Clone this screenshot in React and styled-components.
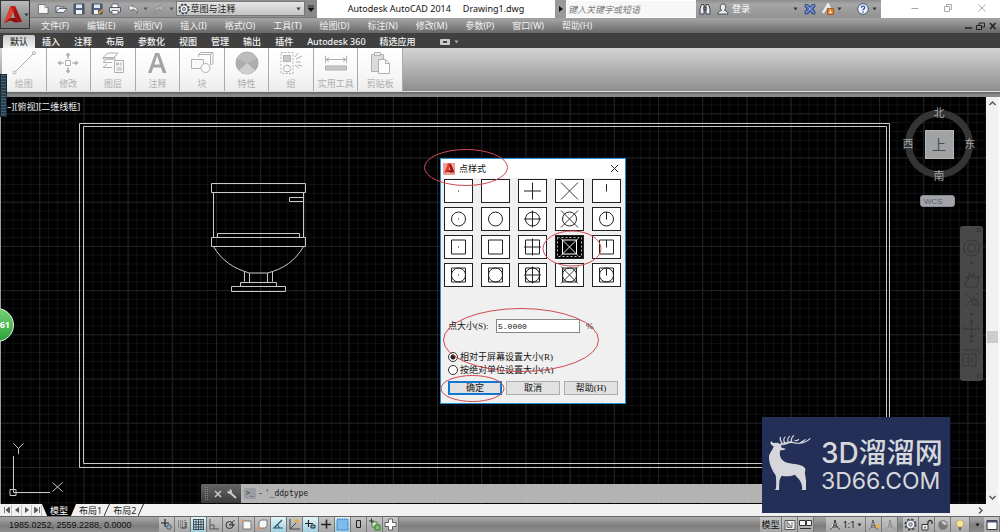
import React, { useState } from 'react';
import styled, { createGlobalStyle } from 'styled-components';

const GlobalStyle = createGlobalStyle`
  * {
    box-sizing: border-box;
  }
  body {
    margin: 0;
    background: #000;
    font-family: "Noto Sans", "Noto Sans CJK SC", sans-serif;
    font-size: 9px;
    line-height: 12px;
  }
  button, input, select {
    font: inherit;
    color: inherit;
    margin: 0;
    padding: 0;
    border: none;
    background: none;
  }
  svg {
    display: block;
    flex: none;
  }
`;

/* ---------- icons ---------- */

const Svg = ({ w = 12, h = 12, children, ...rest }) => (
  <svg width={w} height={h} viewBox={`0 0 ${w} ${h}`} fill="none" aria-hidden="true" {...rest}>
    {children}
  </svg>
);

const Caret = ({ color = '#333' }) => (
  <Svg w={5} h={4}><path d="M0.5 0.5h4L2.5 3.5z" fill={color} /></Svg>
);

const AcadLogo = ({ size = 20 }) => (
  <svg width={size} height={size} viewBox="0 0 20 20" aria-hidden="true">
    <path d="M7.5 1h4.5l7 16-6-2.2-3-8-2.5 6L1 18z" fill="#c4201a" />
    <path d="M7.5 1L1 18l6.500-5L10 6.800z" fill="#e0402b" />
    <path d="M1 18l6.500-5h5.500v1.800L19 17l-7 .6-4.500-2z" fill="#8d0f0f" />
    <path d="M12 1l7 16-6-2.200-2-6z" fill="#a01313" />
  </svg>
);

const quickIcons = {
  新建: <><path d="M1.500 1.500h6.500l3 3v6h-9.500z" fill="#f6f6f6" stroke="#3c4858" strokeWidth=".6" /><path d="M8 1.500v3h3" stroke="#667" strokeWidth=".7" /></>,
  打开: <><path d="M1 9.500V3h3l1 1h4v2" fill="#e7ebef" stroke="#3c4858" strokeWidth=".8" /><path d="M1 9.500L4 5.500h8L8.500 9.500z" fill="#f4f6f8" stroke="#3c4858" strokeWidth=".8" /></>,
  保存: <><path d="M1 1h10v10H1z" fill="#53627c" stroke="#323c50" strokeWidth=".8" /><path d="M3 1.500h6v3.500H3z" fill="#dfe5ec" /><path d="M3 7h6v4H3z" fill="#f2f2f2" /></>,
  另存为: <><path d="M1 1h10v10H1z" fill="#53627c" stroke="#323c50" strokeWidth=".8" /><path d="M3 1.500h6v3.500H3z" fill="#dfe5ec" /><path d="M3 7h4v4H3z" fill="#f2f2f2" /><path d="M7 10l4-4 1 1-4 4.500z" fill="#eba63a" stroke="#8a5a1c" strokeWidth=".4" /></>,
  打印: <><path d="M3 1h6v4H3z" fill="#fff" stroke="#445" strokeWidth=".7" /><path d="M0.500 4.500h11v4.500h-11z" fill="#e2e4e8" stroke="#39424f" strokeWidth=".8" /><path d="M3 7.500h6v3.500H3z" fill="#fff" stroke="#445" strokeWidth=".7" /></>,
  放弃: <path d="M5 1.500L1 5l4 3.300V6.300c3 0 4.500 1 5 4 1.200-4.500-1-6.700-5-6.700z" fill="#e9edf2" stroke="#4a5360" strokeWidth=".6" />,
  重做: <path d="M7 1.500L11 5 7 8.300V6.300c-3 0-4.500 1-5 4-1.200-4.500 1-6.700 5-6.700z" fill="#b4b4b4" stroke="#7d7d7d" strokeWidth=".6" />,
};

const Gear = ({ size = 12 }) => (
  <svg width={size} height={size} viewBox="0 0 12 12" fill="none" aria-hidden="true">
    <circle cx="6" cy="6" r="4.800" stroke="#39424f" strokeWidth="1.600" strokeDasharray="2.100 1.670" />
    <circle cx="6" cy="6" r="4" fill="#f3f5f7" stroke="#39424f" strokeWidth=".7" />
    <circle cx="6" cy="6" r="1.600" fill="#ccc" stroke="#39424f" strokeWidth=".7" />
  </svg>
);

const ribbonPanels = [
  ['绘图', <><path d="M3.500 20.500L21 3" /><circle cx="2.500" cy="21.500" r="1.500" /><circle cx="22" cy="2" r="1.500" /></>],
  ['修改', <><path d="M9.500 9.500h5v5h-5z" /><path d="M12 7.500V4M12 16.500V20M7.500 12H4M16.500 12H20" strokeWidth="1.600" /><path d="M9.500 4.500L12 1.500l2.500 3zM9.500 19.500L12 22.500l2.500-3zM4.500 9.500L1.500 12l3 2.500zM19.500 9.500l3 2.500-3 2.500z" fill="#a9a9a9" stroke="none" /></>],
  ['图层', <><path d="M2 6.500L7 2h10l-4 4.500zM2 11.500L6 8h9M2 11.500h9M2 16.500L6 13M2 16.500h9" /><path d="M2 6.500V8h10l3-3.500" /><path d="M13.500 9.500h9v12h-9z" fill="#fafafa" /><path d="M15.500 12h2v2h-2zM19 12h2M19 14h2M15.500 17h5.500M15.500 19h5.500" /></>],
  ['注释', <path d="M3 22L10.200 2h4L21.500 22h-3.800l-1.800-5.500H8.300L6.500 22zM9.300 13.500h5.700L12.200 5z" fill="#a3a3a3" stroke="none" fillRule="evenodd" />],
  ['块', <><path d="M8.500 6V3.500h12v10" /><path d="M8.500 3.500L11 1.500h12v11l-2.500 1.500M20.500 3.500L23 1.500" /><path d="M1.500 8.500h12v9h-12z" fill="#fafafa" /><circle cx="15.500" cy="17" r="4.500" fill="#fafafa" /></>],
  ['特性', <><circle cx="12" cy="12" r="11" fill="#b9b9b9" stroke="#aaa" /><path d="M12 12L2 8A11 11 0 0 1 22 8z" fill="#bcbcbc" stroke="none" /><path d="M12 12L2 8a11 11 0 0 0 2 11.500z" fill="#adadad" stroke="none" /><path d="M12 12l10-4a11 11 0 0 1-2 11.500z" fill="#adadad" stroke="none" /><path d="M12 12L4 19.500a11 11 0 0 0 16 0z" fill="#cfcfcf" stroke="none" /></>],
  ['组', <><path d="M2 1.500h12v21H2z" strokeDasharray="2 1.500" /><path d="M4.500 4.500h7v6h-7z" fill="#c9c9c9" /><circle cx="8" cy="17.500" r="3.500" /><path d="M16 6l3-4M17 8l6-3M17 11h5M16 14l4 3M19 14l4 1" /></>],
  ['实用工具', <><path d="M1.500 5v7M22.500 5v7M3 8.500h18M5 6.500l-3 2 3 2M19 6.500l3 2-3 2" /><path d="M1.500 15h21v4h-21z" fill="#c8c8c8" /></>],
  ['剪贴板', <><path d="M3.500 3.500h12v17h-12z" fill="#dcdcdc" /><path d="M6.500 4.500v-3h6v3z" fill="#eee" /><path d="M10.500 8.500h7l4 4v10h-11z" fill="#fcfcfc" /><path d="M17.500 8.500v4h4" /></>],
];

const statusTools = [
  ['推断约束', false, <><path d="M1 5h8M5 1v8" stroke="#222" strokeWidth="1.200" /><circle cx="9" cy="9" r="2.300" stroke="#456" fill="#9ab" /></>],
  ['捕捉', false, <><path d="M2 3h5M2 5h5M2 7h5M2 9h6M9 2v8" stroke="#555" strokeDasharray="1 1" /><path d="M5 10h5V4" stroke="#333" /></>],
  ['栅格', true, <path d="M1 1.500h11M1 4h11M1 6.500h11M1 9h11M1 11.500h11M1.500 1v11M4 1v11M6.500 1v11M9 1v11M11.500 1v11" stroke="#29323d" strokeWidth=".8" />],
  ['正交', false, <path d="M2 1v10h9M2 7h4v4" stroke="#555" />],
  ['极轴', false, <><circle cx="5.500" cy="7" r="3.500" stroke="#333" /><path d="M5.500 7l5-5M5 7h6" stroke="#333" /></>],
  ['对象捕捉', false, <><path d="M3 3h8v8H3z" fill="#fbfbfb" stroke="#777" /><circle cx="2.500" cy="2.500" r="1.500" fill="#e9965d" /></>],
  ['三维捕捉', false, <><path d="M3 4l2-2h6v6l-2 2H3z" fill="#f8f8f8" stroke="#777" /><circle cx="2.500" cy="10" r="1.500" fill="#e9965d" /></>],
  ['对象追踪', true, <path d="M10 2L2 10h9M5 7c1.500.500 2 1.500 2 3" stroke="#245560" strokeWidth="1.200" />],
  ['动态 UCS', false, <><path d="M2 1v10h10M2 11l7-7" stroke="#444" /><circle cx="9" cy="3" r="2" fill="#efa93b" /></>],
  ['动态输入', true, <><path d="M1 5.500h8M4.500 2v7" stroke="#222" strokeWidth="1.200" /><path d="M7 7h4v3H7z" fill="#8aa" stroke="#234" /></>],
  ['线宽', false, <path d="M1 6.500h10M6.500 1.500v9" stroke="#222" strokeWidth="1.600" />],
  ['透明度', true, <path d="M1 1h11v11H1z" fill="#7cbcf0" stroke="#2c6fae" strokeDasharray="1.500 .7" />],
  ['快捷特性', false, <path d="M4.500 2.500h4v7h-4z" stroke="#222" />],
  ['选择循环', false, <><path d="M1 3h5M3.500.500v5" stroke="#333" /><path d="M4 4h5v5H4z" fill="#d9e6d4" stroke="#3a7c33" /><path d="M7 7h5v5H7z" fill="#7ec36c" stroke="#3a7c33" /></>],
  ['注释监视器', false, <path d="M4.500 1h4v3.500H12v4H8.500V12h-4V8.500H1v-4h3.500z" fill="#fff" stroke="#444" strokeWidth=".8" />],
];

/* ---------- header ---------- */

const Page = styled.div`
  min-height: 100vh;
  display: flex;
  flex-direction: column;
  overflow: hidden;
`;

const Header = styled.header`
  display: grid;
  grid-template-columns: 30px 1fr;
  height: 33px;
  background: linear-gradient(#9c9c9c 18px, #a2a2a2 19px, #696969);
`;

const AppButton = styled.button`
  height: 29px;
  display: flex;
  align-items: center;
  gap: 1px;
  padding-left: 2px;
  border: 1px solid #333;
  background: linear-gradient(#b9b9b9, #777);
`;

const TitleBar = styled.div`
  display: flex;
  height: 18px;
  background: #fff;
`;

const QuickTools = styled.div`
  display: flex;
  align-items: center;
  width: 287px;
  padding-left: 4px;
  background: linear-gradient(#8d8d8d, #a6a6a6 4px, #929292);
  border-bottom: 1px solid #777;
`;

const QuickButton = styled.button`
  width: ${(p) => (p.$narrow ? 8 : 18)}px;
  height: 16px;
  display: flex;
  align-items: center;
  justify-content: center;
`;

const Workspace = styled.label`
  display: flex;
  align-items: center;
  width: 130px;
  height: 15px;
  gap: 1px;
  margin-left: auto;
  padding: 0 3px 0 1px;
  border: 1px solid #777;
  background: linear-gradient(#e6e6e6, #c4c4c4);
  color: #222;
  select {
    flex: 1;
    height: 13px;
    appearance: none;
    outline: none;
  }
`;

const MoreButton = styled.button`
  width: 12px;
  height: 17px;
  display: flex;
  align-items: center;
  justify-content: center;
  background: #8a8a8a;
`;

const WindowTitle = styled.h1`
  flex: 1;
  display: flex;
  justify-content: center;
  align-items: center;
  gap: 12px;
  margin: 0;
  font-size: 9px;
  font-weight: 400;
  color: #111;
  white-space: nowrap;
`;

const SearchArrow = styled.button`
  width: 11px;
  display: flex;
  align-items: center;
  justify-content: center;
  background: #999;
`;

const SearchInput = styled.input`
  width: 130px;
  height: 16px;
  margin-top: 1px;
  padding-left: 2px;
  background: #f7f7f7;
  font-style: italic;
  outline: none;
  &::placeholder {
    color: #777;
  }
`;

const InfoTools = styled.div`
  display: flex;
  align-items: center;
  gap: 6px;
  width: 185px;
  padding: 0 4px 0 3px;
  background: linear-gradient(#8d8d8d, #a6a6a6 4px, #929292);
  color: #fff;
`;

const IconButton = styled.button`
  display: flex;
  align-items: center;
  gap: 3px;
`;

const SignIn = styled(IconButton)`
  flex: 1;
  > svg:last-child {
    margin-left: auto;
  }
`;

const WindowButtons = styled.div`
  display: flex;
  align-items: center;
  justify-content: space-around;
  width: 119px;
  padding: 0 2px 2px 18px;
`;

const MenuBar = styled.nav`
  display: flex;
  align-items: center;
  height: 15px;
  padding-left: 11px;
  gap: 18px;
  color: #f2f2f2;
  white-space: nowrap;
  a {
    color: inherit;
    text-decoration: none;
  }
`;

const DocButtons = styled.div`
  margin-left: auto;
  display: flex;
  gap: 3px;
  padding-right: 3px;
`;

/* ---------- ribbon ---------- */

const RibbonTabs = styled.div`
  display: flex;
  height: 15px;
  padding-left: 3px;
  background: #404040;
  align-items: flex-end;
`;

const RibbonTab = styled.button`
  height: 13px;
  padding: 0 7px;
  color: ${(p) => (p.$active ? '#333' : '#f4f4f4')};
  background: ${(p) => (p.$active ? 'linear-gradient(#c9c9c9, #f4f4f4)' : 'none')};
  border-radius: 2px 2px 0 0;
  font-weight: 500;
  white-space: nowrap;
`;

const TabExtra = styled.button`
  display: flex;
  align-items: center;
  gap: 4px;
  height: 13px;
  margin-left: 17px;
`;

const Ribbon = styled.div`
  height: 49px;
  padding-left: 2px;
  background: linear-gradient(#d4d4d4, #8e8e8e 43px, #dedede 43px, #dedede 44px, #6e6e6e 44px, #6e6e6e 46px, #888 46px, #888);
`;

const Panels = styled.div`
  display: grid;
  grid-template-columns: repeat(9, 1fr);
  width: 401px;
  height: 43px;
`;

const Panel = styled.button`
  display: flex;
  flex-direction: column;
  align-items: center;
  justify-content: space-between;
  padding: 3px 0 1px;
  border-right: 1px solid #aaa;
  background: linear-gradient(#fff, #f7f7f7 60%, #ececec);
  color: #aeaeae;
  white-space: nowrap;
`;

/* ---------- drawing area ---------- */

const Workarea = styled.main`
  flex: 1;
  display: flex;
  min-height: 407px;
`;

const Stage = styled.div`
  position: relative;
  flex: 1;
  overflow: hidden;
  background: #000;
  border-left: 1px solid #999;
`;

const Drawing = styled.svg`
  position: absolute;
  top: 0;
  left: 0;
  width: 100%;
  height: 100%;
  pointer-events: none;
`;

const ViewLabel = styled.div`
  position: absolute;
  top: 4px;
  left: 6px;
  color: #eee;
`;

const Grip = styled.div`
  position: absolute;
  top: 74px;
  left: 0;
  width: 7px;
  height: 43px;
  border: 1px solid #1d2730;
  background: repeating-linear-gradient(#3d6480 0 1px, #2b3d49 1px 3px);
`;

const Badge = styled.div`
  position: absolute;
  top: 308px;
  left: -20px;
  width: 34px;
  height: 34px;
  padding: 9px 3px 0 0;
  border: 1px solid #e4efe4;
  border-radius: 50%;
  background: linear-gradient(#74d277, #2ea23c);
  color: #fff;
  font-weight: 700;
  line-height: 14px;
  text-align: right;
`;

const ViewCube = styled.div`
  position: absolute;
  top: 9px;
  right: 13px;
  width: 68px;
  height: 76px;
  display: grid;
  grid-template: 13px 1fr 13px / 10px 1fr 10px;
  place-items: center;
  color: #a5a5a5;
  font-size: 11px;
  &::before {
    content: "";
    position: absolute;
    inset: 4px 0;
    border: 7px solid #343434;
    border-radius: 50%;
  }
  span {
    position: relative;
    grid-column: 2;
  }
  span:nth-of-type(2) {
    grid-column: 1;
    margin-left: -4px;
  }
  span:nth-of-type(3) {
    grid-column: 3;
    margin-right: -4px;
  }
`;

const CubeFace = styled.button`
  position: relative;
  grid-column: 2;
  grid-row: 2;
  width: 29px;
  height: 29px;
  border: 1px solid #b4b6b8;
  background: #a0a2a4;
  color: #484b50;
  font-size: 14px;
  line-height: 27px;
`;

const Wcs = styled.button`
  position: absolute;
  top: 98px;
  right: 31px;
  width: 35px;
  height: 12px;
  padding-left: 3px;
  border: 1px solid #8b8c93;
  border-radius: 3px;
  background: #a2a3ab;
  color: #5a5c64;
  font-family: "Liberation Sans", sans-serif;
  font-size: 8px;
  line-height: 9px;
  text-align: left;
`;

const NavBar = styled.div`
  position: absolute;
  top: 129px;
  right: 3px;
  width: 23px;
  height: 155px;
  border-radius: 3px;
  background: rgba(78, 78, 78, 0.92);
`;

const CommandLine = styled.div`
  position: absolute;
  left: 200px;
  right: 60px;
  bottom: 1px;
  height: 19px;
  display: flex;
  border-radius: 3px;
  overflow: hidden;
  background: rgba(190, 190, 190, 0.94);
  color: #222;
  font-family: "DejaVu Sans Mono", monospace;
  font-size: 8px;
`;

const CommandGrip = styled.div`
  width: 40px;
  display: flex;
  align-items: center;
  justify-content: space-between;
  padding: 0 4px;
  background: linear-gradient(#666, #3c3c3c);
`;

const CommandField = styled.label`
  flex: 1;
  display: flex;
  align-items: center;
  gap: 2px;
  padding-left: 3px;
  input {
    flex: 1;
    outline: none;
  }
`;

const PromptIcon = styled.span`
  width: 12px;
  height: 11px;
  border-radius: 2px;
  background: #999da3;
  color: #333;
  font-size: 7px;
  line-height: 10px;
  text-align: center;
`;

const ScrollBar = styled.div`
  width: 14px;
  display: flex;
  flex-direction: column;
  align-items: center;
  justify-content: space-between;
  padding: 4px 0;
  background: #f1f1f1;
  border-right: 2px solid #fafafa;
`;

const Thumb = styled.div`
  width: 11px;
  height: 12px;
  margin-top: 72px;
  background: #cdcdcd;
`;

/* ---------- point style dialog ---------- */

const Dialog = styled.section`
  position: absolute;
  top: 61px;
  left: 439px;
  width: 186px;
  border: 1px solid #2a8fce;
  background: #f0f0f0;
  color: #111;
  font-family: "Liberation Serif", "Noto Sans CJK SC", serif;
`;

const DialogTitle = styled.div`
  display: flex;
  align-items: center;
  gap: 4px;
  height: 19px;
  padding: 0 6px 0 2px;
  background: #fff;
  h2 {
    flex: 1;
    margin: 0;
    font-size: 9px;
    font-weight: 400;
  }
`;

const DialogIcon = styled.span`
  width: 12px;
  height: 12px;
  display: grid;
  place-items: center;
  background: #f0a097;
`;

const StyleGrid = styled.div`
  display: grid;
  grid-template-columns: repeat(5, 1fr);
  grid-auto-rows: 24px;
  gap: 4px 8px;
  padding: 1px 5px 0 3px;
`;

const StyleCell = styled.button`
  display: grid;
  place-items: center;
  border: 1px solid #222;
  background: ${(p) => (p.$selected ? '#000' : '#fff')};
  color: ${(p) => (p.$selected ? '#fff' : '#222')};
`;

const SizeRow = styled.label`
  display: flex;
  align-items: center;
  height: 14px;
  margin: 32px 0 17px;
  padding-left: 7px;
  input {
    width: 84px;
    height: 14px;
    margin: 0 6px 0 auto;
    padding-left: 1px;
    border: 1px solid #888;
    background: #fff;
    font-family: "Liberation Mono", monospace;
    font-size: 8px;
    outline: none;
  }
  span:last-child {
    width: 39px;
  }
`;

const RadioRow = styled.label`
  display: flex;
  align-items: center;
  gap: 2px;
  height: 13px;
  padding-left: 7px;
  input {
    appearance: none;
    width: 10px;
    height: 10px;
    border: 1px solid #333;
    border-radius: 50%;
    background: #fff;
  }
  input:checked {
    background: radial-gradient(#222 0 2px, #fff 3px);
  }
`;

const DialogButtons = styled.div`
  display: grid;
  grid-template-columns: repeat(3, 1fr);
  gap: 4px;
  padding: 5px 7px 8px;
`;

const DialogButton = styled.button`
  height: 14px;
  border: ${(p) => (p.$primary ? '2px solid #0f78d0' : '1px solid #adadad')};
  background: #e1e1e1;
  line-height: 10px;
`;

/* ---------- footer ---------- */

const LayoutBar = styled.div`
  display: flex;
  align-items: center;
  height: 12px;
  padding: 0 17px 0 2px;
  background: #f1f1f1;
  color: #222;
  > svg:last-child {
    margin-left: auto;
  }
`;

const PageButton = styled.button`
  width: 10px;
  height: 11px;
  display: grid;
  place-items: center;
  border-right: 1px solid #c4c4c4;
`;

const LayoutTab = styled.button`
  height: 12px;
  line-height: 11px;
  padding: ${(p) => (p.$active ? '0 8px' : '0 2px 0 3px')};
  background: ${(p) => (p.$active ? '#000' : 'none')};
  color: ${(p) => (p.$active ? '#fff' : '#222')};
  clip-path: ${(p) => (p.$active ? 'polygon(0 0, 100% 0, 85% 100%, 15% 100%)' : 'none')};
`;

const StatusBar = styled.footer`
  display: flex;
  align-items: center;
  height: 16px;
  border-top: 1px solid #666;
  background: linear-gradient(#a8a8a8, #7d7d7d 60%, #909090);
  color: #111;
`;

const Coordinates = styled.div`
  width: 159px;
  padding-left: 9px;
  font-family: "Liberation Sans", sans-serif;
  white-space: pre;
`;

const StatusButton = styled.button`
  width: ${(p) => p.$w || 16}px;
  height: 15px;
  display: flex;
  align-items: center;
  justify-content: center;
  gap: 2px;
  border-right: 1px solid #777;
  background: ${(p) => (p.$on ? 'linear-gradient(#e4f4f9, #9fcfdd)' : 'linear-gradient(#c6c6c6, #a6a6a6)')};
`;

const Spacer = styled.div`
  flex: ${(p) => (p.$w ? 'none' : 1)};
  width: ${(p) => p.$w || 0}px;
`;

const Watermark = styled.aside`
  position: absolute;
  right: 50px;
  bottom: 19px;
  width: 188px;
  height: 96px;
  display: flex;
  align-items: center;
  gap: 8px;
  padding-left: 6px;
  background: #232f56;
  color: #d6d7dc;
  white-space: nowrap;
`;

const BrandName = styled.div`
  font-family: Inter, "Noto Sans CJK SC", sans-serif;
  font-size: 28px;
  font-weight: 500;
  line-height: 32px;
`;

const BrandUrl = styled.div`
  font-family: Inter, sans-serif;
  font-size: 23px;
  font-weight: 400;
  line-height: 24px;
`;

const Shell = styled.div`
  position: relative;
`;

const PointGlyph = ({ shape, mark, selected }) => (
  <svg width="27" height="22" viewBox="-13.500 -11 27 22" fill="none" stroke="currentColor" strokeWidth="1" aria-hidden="true">
    {selected && <path d="M-12-9.500h24v19h-24z" strokeDasharray="2 2" stroke="#bbb" />}
    {(shape === 1 || shape === 3) && <circle r="7" />}
    {(shape === 2 || shape === 3) && <path d="M-7-7H7V7H-7z" />}
    {mark === 0 && <path d="M-.5 0h1" />}
    {mark === 2 && <path d="M-8.500 0h17M0-8.500v17" />}
    {mark === 3 && <path d="M-8.500-8.500l17 17M8.500-8.500l-17 17" strokeWidth=".9" />}
    {mark === 4 && <path d="M0-7V0.500" />}
  </svg>
);

const Deer = () => (
  <svg width="45" height="64" viewBox="-6 24 135 192" fill="none" aria-hidden="true">
    <path
      d="M4 48l5 6 14-1 8 5 4 10 12 3-4 4-12 1c-3 9-2 16 2 24 8 13 22 15 40 17 15 1 28 6 33 14 1 6-2 8-1 15l3 20v29H93l4-3c-1-12-4-21-10-29-5-5-9-9-12-14-14 6-28 6-40 3-3 4-6 11-7 18l-1 25H13l5-4c1-14 1-28-1-40C8 137-3 118-3 98c0-16 11-20 14-34-5-2-8-5-10-9z"
      fill="#d6d7dc"
    />
    <path
      d="M32 60c14 0 24-10 38-7s34 4 50-12M30 58c8-6 24-3 36-9M37 55c-5-6-8-10-6-18M44 52c-4-5-3-11 1-16M54 50c-2-6 0-12 5-16M64 48c-1-7 2-12 7-16M74 46c4 2 8 2 12-3M88 56c6-6 12-7 18-12"
      stroke="#d6d7dc"
      strokeWidth="3.500"
      strokeLinecap="round"
    />
  </svg>
);

const menus = ['文件(F)', '编辑(E)', '视图(V)', '插入(I)', '格式(O)', '工具(T)', '绘图(D)', '标注(N)', '修改(M)', '参数(P)', '窗口(W)', '帮助(H)'];
const tabs = ['默认', '插入', '注释', '布局', '参数化', '视图', '管理', '输出', '插件', 'Autodesk 360', '精选应用'];

const Model = () => (
  <Drawing>
    <defs>
      <pattern id="minor" width="8.840" height="8.840" x="38.200" y="16.300" patternUnits="userSpaceOnUse">
        <path d="M.5 0v9M0 .5h9" stroke="#0e1013" fill="none" />
      </pattern>
      <pattern id="major" width="44.200" height="44.200" x="38.200" y="16.300" patternUnits="userSpaceOnUse">
        <path d="M.5 0v45M0 .5h45" stroke="#1e2126" fill="none" />
      </pattern>
    </defs>
    <rect width="100%" height="100%" fill="url(#minor)" />
    <rect width="100%" height="100%" fill="url(#major)" />
    <g transform="translate(-1 -97)" fill="none" stroke="#c9c9c9">
      <path d="M79.500 123.500h810v344h-810zM83.500 126.500h803v337h-803z" />
      <path d="M211.500 183.500h94v9h-94zM213.500 192.500v45M303.500 192.500v45M303.500 197.500h-14v4h14" />
      <path d="M217.500 237v-3.500h82v3.500M211.500 237.500h94v9h-94z" />
      <path d="M213.500 246.500c8 14 20 22 36 26.500h18c16-4 28-12.500 36-26.500" />
      <path d="M244.500 271.500v10M249.500 273v9M267.500 273v9M272.500 271.500v10M240.500 282.500h36v4h-36zM231.500 286.500h54v5h-54z" />
      <path d="M10 489.500h6v6h-6zM13.500 456v36.500H50" />
      <path d="M13.500 443.500l5 5 5-5M18.500 448.500v5.500M52.500 482.500l10 9M62.500 482.500l-10 9" />
    </g>
  </Drawing>
);

const PointStyleDialog = () => {
  const [selected, setSelected] = useState(13);
  const [size, setSize] = useState('5.0000');
  return (
    <Dialog role="dialog" aria-label="点样式">
      <DialogTitle>
        <DialogIcon><AcadLogo size={11} /></DialogIcon>
        <h2>点样式</h2>
        <IconButton aria-label="关闭"><Svg w={9} h={9}><path d="M1 1l7 7M8 1L1 8" stroke="#222" /></Svg></IconButton>
      </DialogTitle>
      <StyleGrid>
        {Array.from({ length: 20 }, (_, i) => (
          <StyleCell key={i} $selected={i === selected} onClick={() => setSelected(i)} aria-label={`样式 ${i + 1}`}>
            <PointGlyph shape={Math.floor(i / 5)} mark={i % 5} selected={i === selected} />
          </StyleCell>
        ))}
      </StyleGrid>
      <SizeRow>
        <span>点大小(S):</span>
        <input value={size} onChange={(e) => setSize(e.target.value)} />
        <span>%</span>
      </SizeRow>
      <RadioRow><input type="radio" name="unit" defaultChecked />相对于屏幕设置大小(R)</RadioRow>
      <RadioRow><input type="radio" name="unit" />按绝对单位设置大小(A)</RadioRow>
      <DialogButtons>
        <DialogButton $primary>确定</DialogButton>
        <DialogButton>取消</DialogButton>
        <DialogButton>帮助(H)</DialogButton>
      </DialogButtons>
    </Dialog>
  );
};

const TopBar = () => (
  <Header>
    <AppButton aria-label="应用程序菜单"><AcadLogo size={20} /><Caret /></AppButton>
    <div>
      <TitleBar>
        <QuickTools>
          {Object.entries(quickIcons).map(([name, icon]) => (
            <React.Fragment key={name}>
              <QuickButton aria-label={name}><Svg>{icon}</Svg></QuickButton>
              {(name === '放弃' || name === '重做') && <QuickButton $narrow aria-label={`${name}列表`}><Caret color="#555" /></QuickButton>}
            </React.Fragment>
          ))}
          <Workspace>
            <Gear />
            <select aria-label="工作空间"><option>草图与注释</option></select>
            <Caret />
          </Workspace>
          <MoreButton aria-label="自定义"><Svg w={6} h={7}><path d="M0 1h6M0 3h6L3 6.500z" stroke="#111" strokeWidth=".8" fill="#111" /></Svg></MoreButton>
        </QuickTools>
        <WindowTitle><span>Autodesk AutoCAD 2014</span><span>Drawing1.dwg</span></WindowTitle>
        <SearchArrow aria-label="展开"><Svg w={4} h={6}><path d="M0 0l4 3-4 3z" fill="#111" /></Svg></SearchArrow>
        <SearchInput aria-label="搜索" placeholder="键入关键字或短语" />
        <InfoTools>
          <IconButton aria-label="查找">
            <Svg><path d="M2.500 1.500h2.500v9.500H1V6zM7 1.500h2.500L11 6v5H7zM5 4h2v3H5z" fill="#e8ebee" stroke="#2d3642" strokeWidth=".9" /></Svg>
          </IconButton>
          <SignIn>
            <Svg><path d="M1 11c0-2.500 2-3 3.500-3.500C2.500 4.500 3 1 6 1s3.500 3.500 1.500 6.500C9 8 11 8.500 11 11z" fill="#e8ebee" stroke="#2d3642" strokeWidth=".8" /></Svg>
            登录
            <Caret />
          </SignIn>
          <IconButton aria-label="Exchange">
            <Svg><path d="M1 1.500h3L6 4l2-2.500h3V4L9 6l2 2.500v2.500H8L6 8l-2 3H1V8.500L3 6 1 4z" fill="#4b68ae" stroke="#20376f" strokeWidth=".6" /><path d="M2 2l8 8M10 2l-8 8" stroke="#a9bce6" strokeWidth=".8" /></Svg>
          </IconButton>
          <IconButton aria-label="保持连接">
            <Svg><path d="M1 10L6 1.500 8 6" stroke="#e9edf2" strokeWidth="2.400" /><path d="M5.500 5.500h6v6h-6z" fill="#e37f23" stroke="#93480d" strokeWidth=".7" /><path d="M8.500 7v3M7 8.800l1.500 1.500L10 8.800" stroke="#fff" strokeWidth=".8" /></Svg>
            <Caret />
          </IconButton>
          <Spacer $w={3} />
          <IconButton aria-label="帮助">
            <Svg><circle cx="6" cy="6" r="5.300" fill="#edf2fa" stroke="#3a4a66" strokeWidth=".9" /><path d="M4.300 4.800C4.300 2.500 7.800 2.600 7.800 4.600 7.800 6 6 5.800 6 7.300M6 8.300v1.400" stroke="#2b55a5" strokeWidth="1.300" /></Svg>
            <Caret />
          </IconButton>
        </InfoTools>
        <WindowButtons>
          <IconButton aria-label="最小化"><Svg w={8} h={8}><path d="M.5 4.500h7" stroke="#aaa" /></Svg></IconButton>
          <IconButton aria-label="还原"><Svg w={9} h={8}><path d="M.5 2.500h5v5h-5zM2.500 2V.5h5v5H6" stroke="#aaa" /></Svg></IconButton>
          <IconButton aria-label="关闭"><Svg w={8} h={8}><path d="M.5.5l7 7M7.500.5l-7 7" stroke="#aaa" /></Svg></IconButton>
        </WindowButtons>
      </TitleBar>
      <MenuBar>
        {menus.map((m) => <a key={m} href="#menu">{m}</a>)}
        <DocButtons>
          <IconButton aria-label="最小化图形"><Svg w={9} h={8}><path d="M1 6h7" stroke="#222" strokeWidth="1.500" /></Svg></IconButton>
          <IconButton aria-label="还原图形"><Svg w={9} h={8}><path d="M.5 3.500h5v4h-5zM3 3V1h5.500v4H6" stroke="#222" /></Svg></IconButton>
          <IconButton aria-label="关闭图形"><Svg w={9} h={8}><path d="M2 1l5.500 6M7.500 1L2 7" stroke="#222" strokeWidth="1.600" /></Svg></IconButton>
        </DocButtons>
      </MenuBar>
    </div>
  </Header>
);

const App = () => {
  const [tab, setTab] = useState('默认');
  return (
    <Shell>
      <GlobalStyle />
      <Page>
        <TopBar />
        <RibbonTabs>
          {tabs.map((t) => (
            <RibbonTab key={t} $active={t === tab} onClick={() => setTab(t)}>{t}</RibbonTab>
          ))}
          <TabExtra aria-label="最小化面板">
            <Svg w={10} h={6}><rect width="10" height="6" rx="1" fill="#ccc" /><rect x="3" y="2" width="4" height="2" fill="#444" /></Svg>
            <Caret color="#aaa" />
          </TabExtra>
        </RibbonTabs>
        <Ribbon>
          <Panels>
            {ribbonPanels.map(([name, icon]) => (
              <Panel key={name}>
                <Svg w={24} h={24} stroke="#b0b0b0">{icon}</Svg>
                {name}
              </Panel>
            ))}
          </Panels>
        </Ribbon>
        <Workarea>
          <Stage>
            <Model />
            <ViewLabel>–][俯视][二维线框]</ViewLabel>
            <ViewCube>
              <span>北</span>
              <span>西</span>
              <CubeFace>上</CubeFace>
              <span>东</span>
              <span>南</span>
            </ViewCube>
            <Wcs>WCS</Wcs>
            <NavBar>
              <Svg w={23} h={155} stroke="#363636">
                <circle cx="19" cy="4" r="2" />
                <circle cx="11.500" cy="22" r="8" /><circle cx="11.500" cy="22" r="4" />
                <path d="M10 37h3M10 88h3M10 115h3" strokeWidth="2" />
                <path d="M7 61c-4-5-3-6 0-4l-1-7 3 4V47l3 5 2-5 1 6 4-3-2 11z" />
                <path d="M5 67l14 14M18 67L4 81M15 74l5 5" /><circle cx="15" cy="76" r="3" />
                <path d="M3 103h17M11.500 94v17M3 103l3-3M20 103l-3-3M9 97l2.500-3 2.500 3M9 109l2.500 3 2.500-3" />
                <path d="M3 128h13v12H3zM3 124h16v4M8 131l5 3-5 3z" />
                <circle cx="19" cy="150" r="2" />
              </Svg>
            </NavBar>
            <CommandLine>
              <CommandGrip>
                <Svg w={4} h={14}><path d="M.5 0v14M2.500 0v14" stroke="#888" strokeDasharray="1 1" /></Svg>
                <Svg w={8} h={8}><path d="M1 1l6 6M7 1L1 7" stroke="#ccc" strokeWidth="1.500" /></Svg>
                <Svg w={11} h={11}><path d="M4 4.500l6 5.500" stroke="#ccc" strokeWidth="2" /><path d="M1 3.500c.5 3 5 3 5 0 0-1.500-1-2.500-2.500-2.500L4 3z" fill="#ccc" /></Svg>
              </CommandGrip>
              <CommandField>
                <PromptIcon>&gt;_</PromptIcon>
                <span>-</span>
                <input defaultValue="'_ddptype" aria-label="命令" />
              </CommandField>
            </CommandLine>
            <PointStyleDialog />
            <Drawing>
              <g transform="translate(-1 -97)" fill="none" stroke="#cf4a50">
                <ellipse cx="466" cy="167.500" rx="41.500" ry="18" />
                <ellipse cx="572" cy="248.500" rx="29" ry="17.500" />
                <ellipse cx="521" cy="340" rx="77.500" ry="31.500" />
                <ellipse cx="472.500" cy="388.500" rx="31.500" ry="13" />
              </g>
            </Drawing>
          </Stage>
          <ScrollBar>
            <Svg w={7} h={5}><path d="M.5 4l3-3 3 3" stroke="#555" strokeWidth="1.400" /></Svg>
            <Thumb />
            <Svg w={7} h={5}><path d="M.5 1l3 3 3-3" stroke="#555" strokeWidth="1.400" /></Svg>
          </ScrollBar>
        </Workarea>
        <LayoutBar>
          <PageButton aria-label="首个"><Svg w={6} h={6}><path d="M.5 0v6M5.500 0v6L2 3z" stroke="#555" strokeWidth=".8" fill="#555" /></Svg></PageButton>
          <PageButton aria-label="上一个"><Svg w={6} h={6}><path d="M5 0v6L1 3z" fill="#555" /></Svg></PageButton>
          <PageButton aria-label="下一个"><Svg w={6} h={6}><path d="M1 0v6l4-3z" fill="#555" /></Svg></PageButton>
          <PageButton aria-label="末个"><Svg w={6} h={6}><path d="M5.500 0v6M.5 0v6L4 3z" stroke="#555" strokeWidth=".8" fill="#555" /></Svg></PageButton>
          <LayoutTab $active>模型</LayoutTab>
          <LayoutTab>布局1</LayoutTab>
          <Svg w={6} h={12}><path d="M0 12L5.500 0" stroke="#333" /></Svg>
          <LayoutTab>布局2</LayoutTab>
          <Svg w={6} h={12}><path d="M0 12L5.500 0" stroke="#333" /></Svg>
          <Svg w={5} h={7}><path d="M1 .5l3 3-3 3" stroke="#555" strokeWidth="1.400" /></Svg>
        </LayoutBar>
        <StatusBar>
          <Coordinates>1985.0252, 2559.2288, 0.0000</Coordinates>
          {statusTools.map(([name, on, icon]) => (
            <StatusButton key={name} $on={on} aria-label={name}><Svg w={13} h={13}>{icon}</Svg></StatusButton>
          ))}
          <Spacer />
          <StatusButton $w={22}>模型</StatusButton>
          <StatusButton aria-label="图形">
            <Svg><path d="M1 1.500h10v9H1z" fill="#f6f6f6" stroke="#555" /><path d="M3 2.500l5 6H3zM8 3v5" stroke="#777" fill="#bbb" /></Svg>
          </StatusButton>
          <StatusButton aria-label="快速查看布局">
            <Svg w={13} h={12}><path d="M.5 1.500h6v5h-6zM7.500 1.500h5v5h-5z" fill="#f6f6f6" stroke="#333" /><path d="M1 9.500h11" stroke="#333" /></Svg>
          </StatusButton>
          <Spacer $w={12} />
          <StatusButton $w={40}>
            <Svg><path d="M6 1v5L1 10.500M6 6l5 4.500M4 8l2-7 2 7z" stroke="#333" fill="#fff" strokeWidth=".9" /></Svg>
            1:1
            <Caret />
          </StatusButton>
          <StatusButton aria-label="注释可见性">
            <Svg><path d="M5 1v5L1 10.500M5 6l5 4.500M3 8l2-7 2 7z" stroke="#555" fill="#fff" strokeWidth=".9" /><circle cx="9.500" cy="7" r="2" fill="#f3b13d" /></Svg>
          </StatusButton>
          <StatusButton aria-label="自动缩放">
            <Svg><path d="M6 1v5L1 10.500M6 6l5 4.500M4 8l2-7 2 7z" stroke="#888" fill="#ccc" strokeWidth=".9" /></Svg>
          </StatusButton>
          <Spacer $w={5} />
          <StatusButton aria-label="切换工作空间"><Gear size={13} /></StatusButton>
          <StatusButton aria-label="锁定">
            <Svg><path d="M1 5.500h6V11H1z" fill="#f3f3f3" stroke="#333" /><path d="M7 5V3.500a2 2 0 0 1 4 0V5M4 7.500v2" stroke="#333" strokeWidth="1.300" /></Svg>
          </StatusButton>
          <StatusButton aria-label="硬件加速">
            <Svg><circle cx="6" cy="6" r="4.800" fill="#777" /><path d="M4 2.500c3-1 5.500.500 6 3L7 6z" fill="#ccc" /></Svg>
          </StatusButton>
          <StatusButton $w={19} aria-label="隔离对象">
            <Svg><path d="M4 8C1 5 3 1 6 1s5 4 2 7z" fill="#fbe795" stroke="#a98f2c" strokeWidth=".6" /><path d="M4.500 9h3M5 10.500h2" stroke="#444" /></Svg>
          </StatusButton>
          <Spacer $w={5} />
          <IconButton aria-label="状态栏菜单"><Caret color="#111" /></IconButton>
          <Spacer $w={4} />
          <StatusButton aria-label="全屏显示">
            <Svg><path d="M1 1.500h10v9H1z" fill="#fafafa" stroke="#334" /><path d="M1 2.500h10" stroke="#456" strokeWidth="2" /></Svg>
          </StatusButton>
        </StatusBar>
      </Page>
      <Grip />
      <Badge>61</Badge>
      <Watermark>
        <Deer />
        <div>
          <BrandName>3D溜溜网</BrandName>
          <BrandUrl>3D66.COM</BrandUrl>
        </div>
      </Watermark>
    </Shell>
  );
};

export default App;
